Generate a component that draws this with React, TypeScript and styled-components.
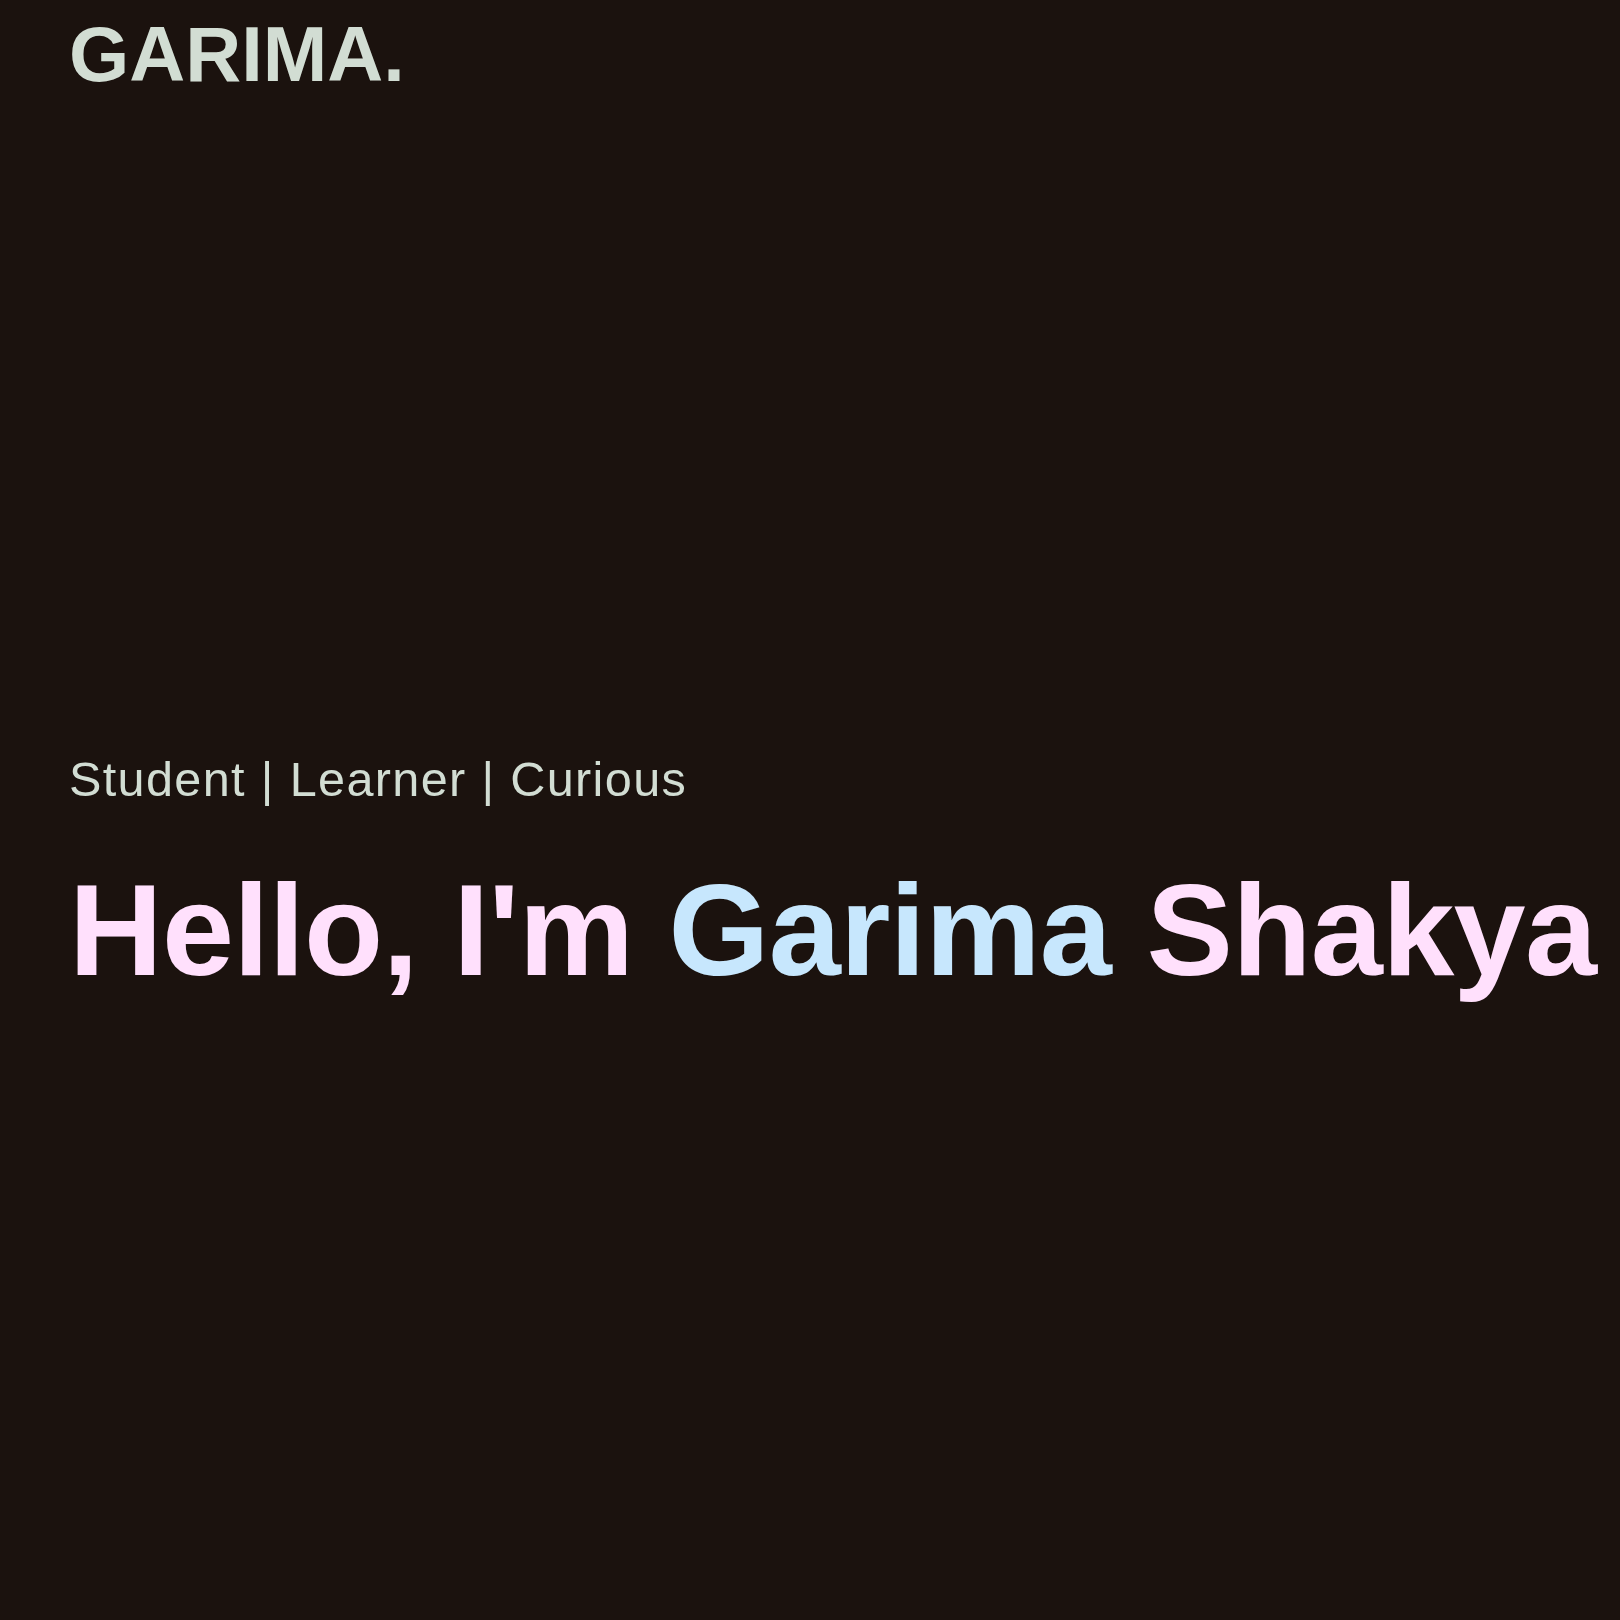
import React from "react";
import styled, { createGlobalStyle } from "styled-components";

const GlobalStyle = createGlobalStyle`
  html, body {
    margin: 0;
    padding: 0;
    background: #1b120e;
  }
  body {
    font-family: "Liberation Sans", Arial, sans-serif;
    min-height: 1620px;
  }
`;

const Page = styled.div`
  min-height: 1620px;
  background: #1b120e;
  padding: 0 69px;
  box-sizing: border-box;
  display: flex;
  flex-direction: column;
`;

const Header = styled.header`
  display: flex;
  align-items: center;
  padding-top: 10px;
`;

const Logo = styled.div`
  font-size: 77.5px;
  font-weight: 700;
  line-height: 1.15;
  color: #d2ddd3;
`;

const Hero = styled.section`
  display: flex;
  flex-direction: column;
  margin-top: 653px;
`;

const Tagline = styled.p`
  margin: 0;
  font-size: 48.6px;
  line-height: 1.15;
  letter-spacing: 1.35px;
  color: #d2ddd3;
`;

const Title = styled.h1`
  margin: 48px 0 0;
  font-size: 129.6px;
  font-weight: 700;
  line-height: 1.15;
  letter-spacing: -0.67px;
  white-space: nowrap;
  color: #ffe0fc;
`;

const Accent = styled.span`
  color: #c7e7fd;
`;

export default function App() {
  return (
    <>
      <GlobalStyle />
      <Page>
        <Header>
          <Logo>GARIMA.</Logo>
        </Header>
        <Hero>
          <Tagline>Student | Learner | Curious</Tagline>
          <Title>
            Hello, I'm <Accent>Garima</Accent> Shakya
          </Title>
        </Hero>
      </Page>
    </>
  );
}
